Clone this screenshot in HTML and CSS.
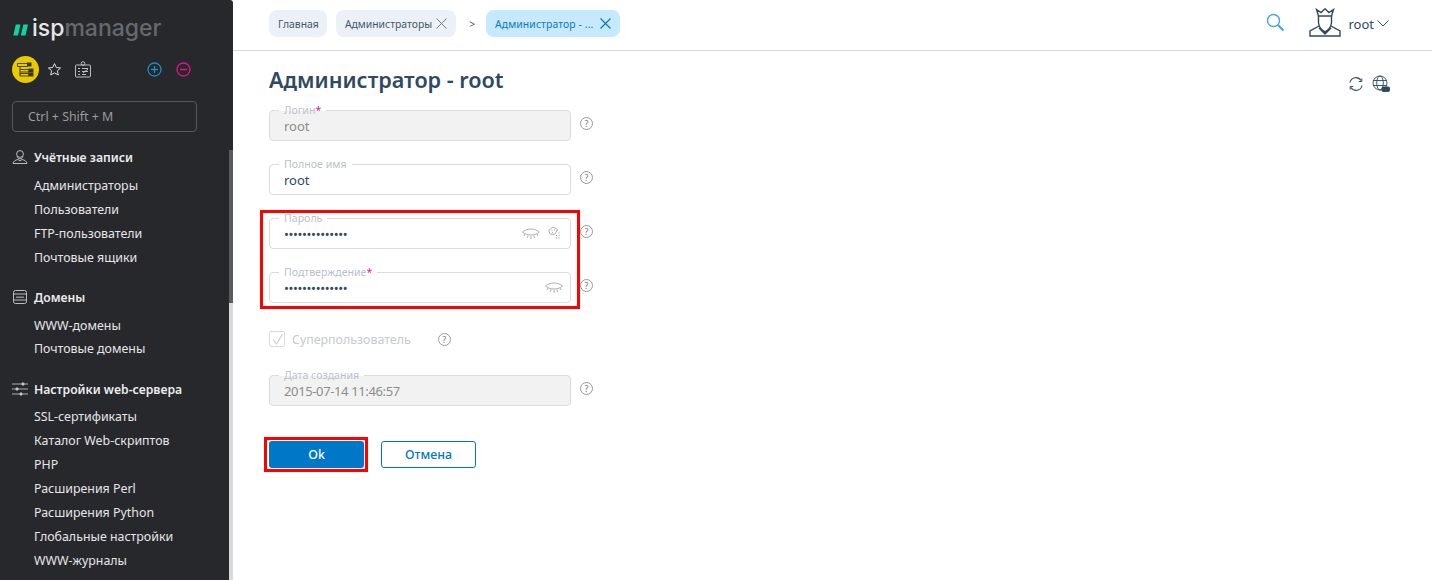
FILE: index.html
```html
<!DOCTYPE html>
<html lang="ru">
<head>
<meta charset="utf-8">
<title>ispmanager</title>
<link rel="stylesheet" href="styles.css">
</head>
<body>
<div class="app">
  <aside class="sidebar">
    <div class="logo">
      <svg class="logo-mark" width="16" height="12" viewBox="0 0 16 12"><path d="M2.800 0.500H7.500L5 11.500H0.300ZM10.300 0.500H15L12.500 11.500H7.800Z" fill="#10d3a3"/></svg>
      <span class="logo-text"><b>isp</b>manager</span>
    </div>
    <div class="tools">
      <span class="round-tool">
        <svg width="17" height="15" viewBox="0 0 17 15" fill="none" stroke="#3a3510" stroke-width=".9"><path d="M.5 1.500H10.500V4.500H.5ZM3 4.500V13.500M3 7.500H12V10H3M3 11.500H12V14H3Z"/><rect x="10.500" y="1" width="3.500" height="3" fill="#3a3510"/><rect x="12" y="7" width="4" height="3" fill="#3a3510"/><rect x="12" y="11" width="4" height="3" fill="#3a3510"/></svg>
      </span>
      <svg class="star" width="15" height="15" viewBox="0 0 15 15" fill="none" stroke="#ddd" stroke-width="1" stroke-linejoin="round"><path d="M7.500 1.600L9.300 5.500L13.600 6L10.400 8.800L11.300 13L7.500 10.900L3.700 13L4.600 8.800L1.400 6L5.700 5.500Z"/></svg>
      <svg class="badge" width="18" height="17" viewBox="0 0 18 17" fill="none" stroke="#ccc" stroke-width=".9"><rect x="1.500" y="4" width="15" height="12" rx="1"/><circle cx="9" cy="2.500" r="1.800"/><path d="M4 7.500H6M8 7.500H14M4 10.500H6M8 10.500H14M4 13.500H6M8 13.500H12M9 12L14 8"/></svg>
      <span class="tools-space"></span>
      <svg width="15" height="15" viewBox="0 0 15 15" fill="none" stroke="#1c8ac4" stroke-width="1.300"><circle cx="7.500" cy="7.500" r="6.500"/><path d="M4 7.500H11M7.500 4V11"/></svg>
      <svg class="minus" width="15" height="15" viewBox="0 0 15 15" fill="none" stroke="#e6128a" stroke-width="1.300"><circle cx="7.500" cy="7.500" r="6.500"/><path d="M4 7.500H11"/></svg>
    </div>
    <div class="search">Ctrl + Shift + M</div>
    <nav class="menu">
      <section class="group">
        <h3 class="group-head">
          <svg width="16" height="16" viewBox="0 0 16 16" fill="none" stroke="#ccc" stroke-width=".9"><circle cx="8" cy="5" r="3.400"/><path d="M5 7.500C5.500 9 6.500 9.800 8 9.800S10.500 9 11 7.500M1 14.500C1.500 12 3.500 11 6 10.500L8 12L10 10.500C12.500 11 14.500 12 15 14.500Z"/></svg>
          Учётные записи
        </h3>
        <a class="item">Администраторы</a>
        <a class="item">Пользователи</a>
        <a class="item">FTP-пользователи</a>
        <a class="item">Почтовые ящики</a>
      </section>
      <section class="group group-domains">
        <h3 class="group-head">
          <svg width="16" height="16" viewBox="0 0 16 16" fill="none" stroke="#ccc" stroke-width=".9"><rect x="1.500" y="1.500" width="13" height="13" rx="2"/><path d="M1.500 5H14.500M1.500 11H14.500"/><path d="M4 9L5 7.500L6 9L7 7.500L8 9L9 7.500L10 9L11 7.500L12 9" stroke-width=".7"/></svg>
          Домены
        </h3>
        <a class="item">WWW-домены</a>
        <a class="item">Почтовые домены</a>
      </section>
      <section class="group group-web">
        <h3 class="group-head">
          <svg width="16" height="16" viewBox="0 0 16 16" fill="none" stroke="#bbb" stroke-width=".9"><path d="M0 3H16M0 8H16M0 13H16"/><circle cx="11" cy="3" r="1.200" fill="#ddd"/><circle cx="5" cy="8" r="1.200" fill="#ddd"/><circle cx="9" cy="13" r="1.200" fill="#ddd"/></svg>
          Настройки web-сервера
        </h3>
        <a class="item">SSL-сертификаты</a>
        <a class="item">Каталог Web-скриптов</a>
        <a class="item">PHP</a>
        <a class="item">Расширения Perl</a>
        <a class="item">Расширения Python</a>
        <a class="item">Глобальные настройки</a>
        <a class="item">WWW-журналы</a>
      </section>
    </nav>
    <div class="scroll-track"></div>
    <div class="scroll-thumb"></div>
  </aside>
  <main class="main">
    <header class="topbar">
      <span class="tab tab-home">Главная</span>
      <span class="tab tab-close">Администраторы
        <svg width="11" height="11" viewBox="0 0 11 11" stroke="#777" stroke-width="1"><path d="M.5 .5L10.500 10.500M10.500 .5L.5 10.500"/></svg>
      </span>
      <span class="crumb-sep">&gt;</span>
      <span class="tab tab-active">Администратор - ...
        <svg width="11" height="11" viewBox="0 0 11 11" stroke="#0a78c2" stroke-width="1.200"><path d="M.5 .5L10.500 10.500M10.500 .5L.5 10.500"/></svg>
      </span>
      <span class="topbar-space"></span>
      <svg class="top-search" width="19" height="19" viewBox="0 0 19 19" fill="none" stroke="#4aa3de" stroke-width="1.400"><circle cx="7.500" cy="7.500" r="6"/><path d="M12 12L17.500 17.500" stroke-width="2.200"/></svg>
      <svg class="avatar" width="32" height="29" viewBox="0 0 32 29" fill="none" stroke="#2f4a60" stroke-width="1.400"><path d="M9.500 8L7.500 1.500L12 4.500L16 .8L20 4.500L24.500 1.500L22.500 8Z"/><path d="M9.500 8V15C10 19 13 23 16 24C19 23 22 19 22.500 15V8"/><path d="M10 18L1 23V28H31V23L22 18"/><path d="M10 20L16 26L22 20L16 24Z" fill="#2f4a60"/></svg>
      <span class="user-name">root</span>
      <svg class="chev" width="12" height="7" viewBox="0 0 12 7" fill="none" stroke="#2f4a60"><path d="M.5 .5L6 6L11.500 .5"/></svg>
    </header>
    <div class="content">
      <div class="title-row">
        <h1 class="title">Администратор - root</h1>
        <span class="title-space"></span>
        <svg class="title-icon" width="16" height="16" viewBox="0 0 16 16" fill="none" stroke="#2f4a60" stroke-width="1.100"><path d="M2 6.500A6 6 0 0 1 13 4.500M14 9.500A6 6 0 0 1 3 11.500"/><path d="M13.800 2.500V5.500H10.800M2.200 13.500V10.500H5.200" stroke-width="1"/></svg>
        <svg class="title-icon globe" width="18" height="18" viewBox="0 0 18 18" fill="none" stroke="#2f4a60" stroke-width=".9"><circle cx="8" cy="8" r="7"/><ellipse cx="8" cy="8" rx="3.300" ry="7"/><path d="M1 5.500H15M1 10.500H15"/><rect x="10" y="12" width="7.500" height="4.500" rx="1" fill="#2f4a60"/></svg>
      </div>
      <form class="form">
        <div class="row">
          <div class="field field-off"><span class="legend">Логин<i class="req">*</i></span><span class="value">root</span></div>
          <span class="help">?</span>
        </div>
        <div class="row">
          <div class="field"><span class="legend">Полное имя</span><span class="value value-dark">root</span></div>
          <span class="help">?</span>
        </div>
        <div class="marked marked-pass">
          <div class="row">
            <div class="field"><span class="legend">Пароль</span><span class="value dots">••••••••••••••</span>
              <svg class="eye" width="18" height="12" viewBox="0 0 18 12" fill="none" stroke="#999" stroke-width=".8"><path d="M.5 4C5 0 13 0 17.500 4C13 8 5 8 .5 4ZM6 7.500L5.500 10M9 8V11M12 7.500L12.500 10M3 6L2 8M15 6L16 8"/></svg>
              <svg class="gen" width="13" height="13" viewBox="0 0 13 13" fill="none" stroke="#999" stroke-width=".8"><path d="M.8 4.500L5 1L9.500 3.500L6.500 8.500L2 8Z"/><path d="M3.500 4.500H4.500M6 4H7M4 6.500H5"/><path d="M8 9.500H9M10.500 7H11.500M10.500 9.500H11.500M8 12H9M10.500 12H11.500" stroke-width="1.200"/></svg>
            </div>
            <span class="help">?</span>
          </div>
          <div class="row">
            <div class="field"><span class="legend">Подтверждение<i class="req">*</i></span><span class="value dots">••••••••••••••</span>
              <svg class="eye eye-last" width="18" height="12" viewBox="0 0 18 12" fill="none" stroke="#999" stroke-width=".8"><path d="M.5 4C5 0 13 0 17.500 4C13 8 5 8 .5 4ZM6 7.500L5.500 10M9 8V11M12 7.500L12.500 10M3 6L2 8M15 6L16 8"/></svg>
            </div>
            <span class="help">?</span>
          </div>
        </div>
        <div class="check-row">
          <span class="check"><svg width="13" height="13" viewBox="0 0 13 13" fill="none" stroke="#c9cdd4" stroke-width="1.200"><path d="M2 6.500L5.500 11L11.500 1"/></svg></span>
          <span class="check-label">Суперпользователь</span>
          <span class="help">?</span>
        </div>
        <div class="row">
          <div class="field field-off"><span class="legend">Дата создания</span><span class="value value-date">2015-07-14 11:46:57</span></div>
          <span class="help">?</span>
        </div>
        <div class="actions">
          <button type="button" class="btn btn-ok marked-ok">Ok</button>
          <button type="button" class="btn btn-cancel">Отмена</button>
        </div>
      </form>
    </div>
  </main>
</div>
</body>
</html>
```
FILE: styles.css
```css
*, *::before, *::after { box-sizing: border-box; }
html, body { margin: 0; height: 100%; overflow: hidden; }
body { font-family: "Noto Sans", "Open Sans", sans-serif; font-size: 13px; color: #2f4a60; background: #fff; }
.app { display: flex; height: 580px; }

.sidebar { position: relative; width: 233px; flex: none; height: 580px; background: #26282c; color: #e8e8e8; overflow: hidden; border-top-right-radius: 3px; padding: 17px 0 0 12px; }
.logo { display: flex; align-items: center; height: 24px; padding-left: 1px; }
.logo-text { font-family: Inter, sans-serif; font-size: 23px; font-weight: 500; color: #66686b; margin-left: 3px; line-height: 24px; position: relative; top: -1px; }
.logo-text b { font-weight: 500; color: #e6e6e6; }
.logo-mark { margin-top: 1px; }
.tools { display: flex; align-items: center; height: 28px; margin-top: 14px; padding-right: 42px; }
.round-tool { width: 27px; height: 27px; border-radius: 50%; background: #e9c900; display: flex; align-items: center; justify-content: center; }
.star { margin-left: 8px; }
.badge { margin-left: 12px; }
.tools-space { flex: 1; }
.minus { margin-left: 14px; }
.search { width: 185px; height: 31px; margin-top: 18px; border: 1px solid #56585c; border-radius: 4px; padding-left: 15px; line-height: 29px; color: #9a9b9d; font-size: 12.4px; }
.menu { margin-top: 13px; }
.group { margin-bottom: 16px; }
.group-domains { margin-bottom: 17px; }
.group-domains .item:last-child { margin-top: -1px; }
.group-web .group-head { margin-bottom: 3px; }
.group-head { display: flex; align-items: center; gap: 6px; margin: 0 0 4px; height: 24px; font-size: 12.2px; font-weight: 600; color: #ececec; }
.item { display: block; height: 24px; line-height: 26px; padding-left: 22px; font-size: 12.4px; color: #e6e6e6; }
.scroll-track { position: absolute; right: 0; top: 303px; bottom: 0; width: 4px; background: #d9d9d9; }
.scroll-thumb { position: absolute; right: 0; top: 150px; height: 153px; width: 4px; background: #5a5b5e; }

.main { flex: 1; min-width: 0; }
.topbar { display: flex; align-items: center; height: 51px; border-bottom: 1px solid #d9d9d9; padding: 0 43px 3px 36px; }
.tab { display: inline-flex; align-items: center; height: 27px; border-radius: 8px; background: #ebf1f7; padding: 0 9px; font-size: 10.4px; color: #44566a; white-space: nowrap; margin-right: 9px; }
.tab svg { margin-left: 4px; }
.tab-home { padding-right: 8px; }
.crumb-sep { margin: 0 11px 0 4px; font-size: 10.4px; color: #44566a; }
.tab-active { background: #c6e9fd; color: #0a78c2; margin-right: 0; letter-spacing: .1px; }
.tab-active svg { margin-left: 7px; }
.topbar-space { flex: 1; }
.top-search { margin-top: -2px; }
.avatar { margin-left: 24px; margin-top: -2px; }
.user-name { margin-left: 7px; font-size: 13px; }
.chev { margin-left: 3px; }

.content { padding: 0 42px 0 36px; }
.title-row { display: flex; align-items: center; height: 59px; }
.title { margin: -2px 0 0; font-size: 21.6px; font-weight: 600; color: #2f4a60; line-height: 1; }
.title-space { flex: 1; }
.title-icon { margin-top: 6px; }
.globe { margin-left: 8px; }
.row { display: flex; align-items: flex-start; margin-bottom: 23px; }
.field { position: relative; width: 302px; height: 31px; border: 1px solid #dcdcdc; border-radius: 4px; padding: 6px 14px 0; }
.field-off { background: #f2f2f2; }
.legend { position: absolute; left: 9px; top: -6px; padding: 0 5px; font-size: 10.6px; line-height: 11px; color: #bbbfcd; background: #fff; }
.field-off .legend { background: linear-gradient(#fff 50%, #f2f2f2 50%); }
.req { font-style: normal; color: #e6188c; }
.value { display: block; line-height: 18px; color: #8c8c8c; font-size: 13px; }
.value-dark { color: #2f4a60; }
.value-date { letter-spacing: -.37px; }
.dots { color: #2f4a60; letter-spacing: -.37px; font-size: 13px; }
.eye { position: absolute; right: 30px; top: 9px; }
.eye-last { right: 7px; }
.gen { position: absolute; right: 9px; top: 7px; }
.help { display: inline-flex; align-items: center; justify-content: center; width: 13px; height: 13px; margin: 7px 0 0 9px; border: 1px solid #999; border-radius: 50%; font-size: 9px; line-height: 1; color: #777; flex: none; }
.marked { position: relative; }
.marked-pass::before { content: ""; position: absolute; z-index: 1; left: -9px; top: -8px; width: 320px; height: 99px; border: 3px solid #f00; pointer-events: none; }
.check-row { display: flex; align-items: center; height: 16px; margin: 28px 0; }
.check { width: 16px; height: 16px; border: 1px solid #dcdcdc; border-radius: 2px; display: flex; align-items: center; justify-content: center; }
.check-label { margin-left: 7px; color: #c6cad2; font-size: 12.4px; }
.check-row .help { margin: 0 0 0 27px; }
.actions { display: flex; gap: 17px; margin-top: 35px; }
.btn { width: 95px; height: 27px; border-radius: 3px; font: 500 12.4px "Noto Sans", sans-serif; padding: 0; }
.btn-ok { position: relative; background: #0077c7; border: 0; color: #fff; }
.marked-ok::before { content: ""; position: absolute; left: -5px; top: -4px; width: 104px; height: 35px; border: 3px solid #f00; }
.btn-cancel { background: #fff; border: 1px solid #0077c7; color: #0077c7; }
```
